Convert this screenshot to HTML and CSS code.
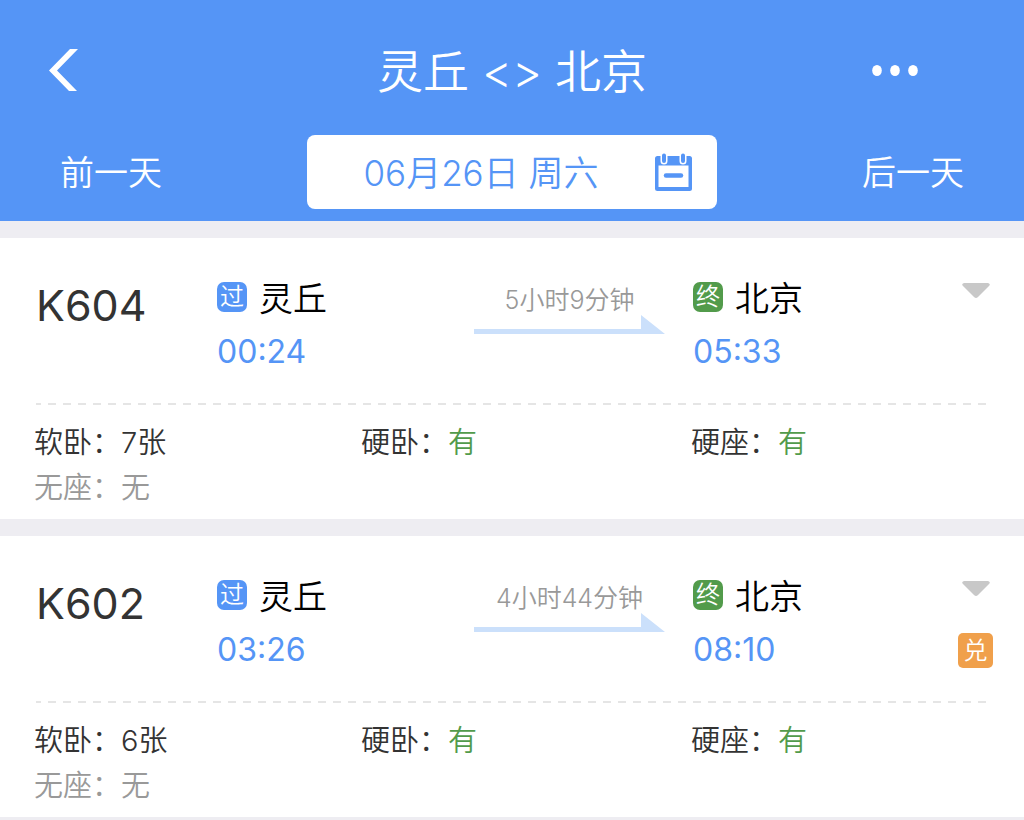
FILE: index.html
```html
<!DOCTYPE html>
<html lang="zh-CN">
<head>
    <meta charset="UTF-8">
    <meta name="viewport" content="width=device-width, initial-scale=1.0">
    <title>灵丘 - 北京</title>
    <link rel="stylesheet" href="styles.css">
</head>
<body>

    <!-- Header -->
    <header class="header">
        <div class="title-bar">
            <button class="back" type="button" aria-label="返回">
                <svg width="30" height="44" viewBox="0 0 30 44"><path d="M22 0H30L9 21.500L29 42H21L1 21.500Z" fill="#fff"/></svg>
            </button>
            <h1>灵丘 &lt;&gt; 北京</h1>
            <button class="more" type="button" aria-label="更多">
                <svg width="46" height="12" viewBox="0 0 46 12" fill="#fff">
                    <ellipse cx="5" cy="5.500" rx="4.800" ry="5.500"/>
                    <ellipse cx="23" cy="5.500" rx="4.800" ry="5.500"/>
                    <ellipse cx="41" cy="5.500" rx="4.800" ry="5.500"/>
                </svg>
            </button>
        </div>
        <div class="date-bar">
            <button class="day" type="button">前一天</button>
            <button class="date" type="button">
                <span class="date-text">06月26日 周六</span>
                <svg width="38" height="38" viewBox="0 0 38 38">
                    <rect x="0" y="3" width="37" height="35" rx="2.500" fill="#5595f6"/>
                    <rect x="3.500" y="12.500" width="30" height="21.500" fill="#fff"/>
                    <path d="M9 2V8M28 2V8" stroke="#fff" stroke-width="7" stroke-linecap="round"/>
                    <path d="M9 2.500V8M28 2.500V8" stroke="#5595f6" stroke-width="4" stroke-linecap="round"/>
                    <path d="M11 22.500H26" stroke="#5595f6" stroke-width="4.500" stroke-linecap="round"/>
                </svg>
            </button>
            <button class="day" type="button">后一天</button>
        </div>
    </header>

    <!-- Train List -->
    <main class="trains">
        <article class="train">
            <div class="trip">
                <h2>K604</h2>
                <div class="stop">
                    <p class="station"><span class="tag pass">过</span>灵丘</p>
                    <p class="time">00:24</p>
                </div>
                <div class="duration">
                    <p>5小时9分钟</p>
                    <svg width="191" height="19" viewBox="0 0 191 19"><path d="M0 14H167V0L191 19H0Z" fill="#cbe0fb"/></svg>
                </div>
                <div class="stop">
                    <p class="station"><span class="tag end">终</span>北京</p>
                    <p class="time">05:33</p>
                </div>
                <div class="side">
                    <button class="expand" type="button" aria-label="展开">
                        <svg width="28" height="15" viewBox="0 0 28 15"><path d="M2 0H26Q29 1 27 3L16 14Q14 16 12 14L1 3Q-1 1 2 0Z" fill="#c8c8c8"/></svg>
                    </button>
                </div>
            </div>
            <div class="divider"></div>
            <ul class="seats">
                <li>软卧：7张</li>
                <li>硬卧：<span class="yes">有</span></li>
                <li>硬座：<span class="yes">有</span></li>
                <li class="none">无座：无</li>
            </ul>
        </article>

        <article class="train">
            <div class="trip">
                <h2>K602</h2>
                <div class="stop">
                    <p class="station"><span class="tag pass">过</span>灵丘</p>
                    <p class="time">03:26</p>
                </div>
                <div class="duration">
                    <p>4小时44分钟</p>
                    <svg width="191" height="19" viewBox="0 0 191 19"><path d="M0 14H167V0L191 19H0Z" fill="#cbe0fb"/></svg>
                </div>
                <div class="stop">
                    <p class="station"><span class="tag end">终</span>北京</p>
                    <p class="time">08:10</p>
                </div>
                <div class="side">
                    <button class="expand" type="button" aria-label="展开">
                        <svg width="28" height="15" viewBox="0 0 28 15"><path d="M2 0H26Q29 1 27 3L16 14Q14 16 12 14L1 3Q-1 1 2 0Z" fill="#c8c8c8"/></svg>
                    </button>
                    <span class="exchange">兑</span>
                </div>
            </div>
            <div class="divider"></div>
            <ul class="seats">
                <li>软卧：6张</li>
                <li>硬卧：<span class="yes">有</span></li>
                <li>硬座：<span class="yes">有</span></li>
                <li class="none">无座：无</li>
            </ul>
        </article>
    </main>

</body>
</html>
```
FILE: styles.css
```css
/* Basic Reset */
* {
    box-sizing: border-box;
}

body {
    margin: 0;
    font-family: Inter, "Noto Sans CJK SC", sans-serif;
    font-weight: 350;
    background-color: #eeedf2;
    color: #333;
}

h1, h2, p, ul {
    margin: 0;
    padding: 0;
    font-weight: inherit;
}

button {
    border: none;
    padding: 0;
    background: none;
    font: inherit;
    color: inherit;
    cursor: pointer;
}

svg {
    display: block;
}

/* Header */
.header {
    background-color: #5595f6;
    color: white;
    padding: 34px 0 12px;
}

.title-bar {
    display: grid;
    grid-template-columns: 1fr auto 1fr;
    align-items: center;
    height: 74px;
    padding: 0 48px;
}

.title-bar h1 {
    font-size: 46px;
    line-height: 74px;
}

.back {
    justify-self: start;
}

.more {
    justify-self: end;
    margin-right: 58px;
}

.date-bar {
    display: flex;
    justify-content: space-between;
    align-items: center;
    margin-top: 27px;
    padding: 0 60px;
}

.day {
    padding-bottom: 3px;
    font-size: 34px;
}

.date {
    display: flex;
    align-items: center;
    width: 410px;
    height: 74px;
    padding-right: 24px;
    background-color: white;
    border-radius: 8px;
    color: #5595f6;
    font-size: 35px;
}

.date-text {
    flex: 1;
    padding-bottom: 3px;
}

/* Train List */
.trains {
    display: flex;
    flex-direction: column;
    gap: 17px;
    padding: 17px 0;
}

.train {
    background-color: white;
    padding-bottom: 9px;
}

.trip {
    display: grid;
    grid-template-columns: 181fr 257fr 219fr 265fr 35px;
    padding: 38px 31px 21px 36px;
}

.trip h2 {
    font-size: 43px;
    font-weight: 400;
    line-height: 58px;
}

.station {
    display: flex;
    align-items: center;
    gap: 12px;
    font-size: 34px;
    line-height: 46px;
    color: black;
}

.tag {
    width: 30px;
    height: 30px;
    margin-bottom: 5px;
    border-radius: 7px;
    color: white;
    font-size: 24px;
    line-height: 30px;
    text-align: center;
}

.pass {
    background-color: #5595f6;
}

.end {
    background-color: #529b4b;
}

.time {
    font-size: 32px;
    font-weight: 400;
    line-height: 60px;
    color: #5595f6;
}

.duration {
    width: 191px;
    padding-top: 9px;
    text-align: center;
    font-size: 25px;
    line-height: 30px;
    color: #999;
}

.side {
    display: flex;
    flex-direction: column;
    align-items: center;
    gap: 37px;
    height: 94px;
    padding-top: 7px;
}

.exchange {
    width: 35px;
    height: 35px;
    border-radius: 5px;
    background-color: #f0a04b;
    color: white;
    font-size: 24px;
    line-height: 35px;
    text-align: center;
}

/* Dashed line between trip and seats */
.divider {
    height: 2px;
    margin: 0 36px;
    background: repeating-linear-gradient(to right, #e5e5e5 0 5px, transparent 5px 12px, #e5e5e5 12px 15px);
}

.seats {
    display: grid;
    grid-template-columns: 327fr 330fr 297fr;
    padding: 15px 36px 0 34px;
    list-style-type: none;
    font-size: 29px;
    line-height: 45px;
}

.none {
    color: #999;
}

.yes {
    color: #529b4b;
}
```
